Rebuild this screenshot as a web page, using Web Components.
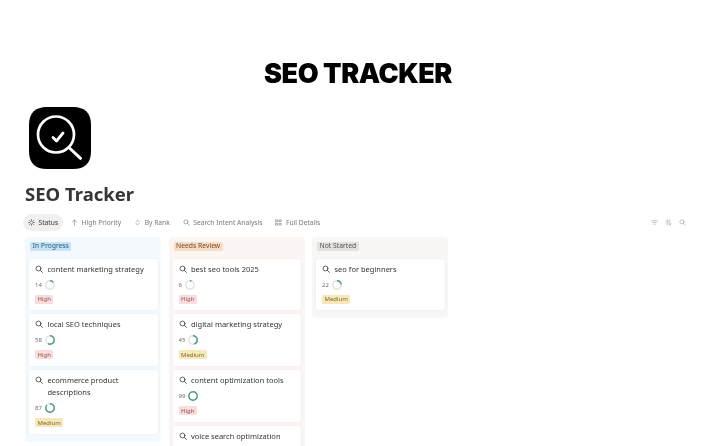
<!DOCTYPE html>
<html><head><meta charset="utf-8"><title>SEO Tracker</title>
<style>
html,body{margin:0;padding:0;background:#fff;height:446px;overflow:hidden}
body{font-family:"Noto Sans","Open Sans",sans-serif;color:#37352f}
</style></head><body>
<seo-app></seo-app>
<script>
const I={
 search:'<circle cx="6.6" cy="6.6" r="4.6"/><path d="M10 10l4 4"/>',
 loader:'<path d="M8 1.5v3M8 11.5v3M1.5 8h3M11.5 8h3M3.4 3.4l2.1 2.1M10.5 10.5l2.1 2.1M3.4 12.6l2.1-2.1M10.5 5.5l2.1-2.1"/>',
 up:'<path d="M8 14.5V2M2.8 7.2L8 2l5.2 5.2"/>',
 updown:'<path d="M4.5 6L8 2.5 11.5 6M4.5 10L8 13.5 11.5 10"/>',
 grid:'<path d="M2 2h4v4H2zM10 2h4v4h-4zM2 10h4v4H2zM10 10h4v4h-4z"/>',
 filter:'<path d="M1.5 4h13M4 8h8M6.5 12h3"/>',
 sort:'<path d="M5 14V2.5M2 5.5l3-3 3 3M11 2v11.5M8 10.5l3 3 3-3"/>'
};
class BaseEl extends HTMLElement{
 render(html){ if(!this.shadowRoot) this.attachShadow({mode:'open'}); this.shadowRoot.innerHTML=html; }
}
class UiIcon extends BaseEl{ connectedCallback(){
 const s=this.getAttribute('size')||8, w=this.getAttribute('weight')||1.5;
 this.render(`<style>:host{display:inline-flex;flex:none;width:${s}px;height:${s}px;color:inherit}svg{width:100%;height:100%;display:block}</style>
 <svg viewBox="0 0 16 16" fill="none" stroke="currentColor" stroke-width="${w}" stroke-linecap="round" stroke-linejoin="round">${I[this.getAttribute('name')]}</svg>`);
}}
class ScoreRing extends BaseEl{ connectedCallback(){
 const v=+this.getAttribute('value');
 this.render(`<style>:host{display:flex;align-items:center;gap:3px;height:12px;font-size:6px;color:#6f6e69}svg{width:10px;height:10px;display:block;transform:rotate(-90deg)}</style>
 <span>${v}</span><svg viewBox="0 0 10 10" fill="none" stroke-width="1.4"><circle cx="5" cy="5" r="4.2" stroke="#e3e2df"/><circle cx="5" cy="5" r="4.2" stroke="#4a9d80" pathLength="100" stroke-dasharray="${v} 100"/></svg>`);
}}
class TagPill extends BaseEl{ connectedCallback(){
 const c=this.getAttribute('kind');
 const m={High:['#fbdcdc','#8f5454'],Medium:['#f7e7b9','#7d6a35'],blue:['#c7e3f8','#2f5c7c'],orange:['#f9dcc3','#6f4a2c'],gray:['#e3e2df','#55534e']}[c];
 this.render(`<style>:host{display:inline-flex;align-items:center;height:var(--h,9px);padding:0 var(--px,2.5px);border-radius:1.5px;background:${m[0]};color:${m[1]};font-size:var(--fs,6px);line-height:1;white-space:nowrap}</style><slot></slot>`);
}}
class SeoCard extends BaseEl{ connectedCallback(){
 const p=this.getAttribute('priority'), s=this.getAttribute('score');
 this.render(`<style>
 :host{display:block;box-sizing:border-box;min-height:51.5px;background:#fff;border-radius:3px;padding:4px 6px 6.5px;box-shadow:0 0 3px rgba(15,15,15,.06)}
 .t{display:flex;gap:4px;font-size:7.5px;line-height:12px;color:#37352f;font-weight:400}
 ui-icon{margin-top:2px;color:#45443f}
 score-ring{margin-top:4px}
 .p{display:flex;margin-top:4px}
 </style><div class="t"><ui-icon name="search" size="8.5" weight="1.6"></ui-icon><span><slot></slot></span></div>
 ${s?`<score-ring value="${s}"></score-ring>`:''}
 ${p?`<div class="p"><tag-pill kind="${p}">${p}</tag-pill></div>`:''}`);
}}
class BoardColumn extends BaseEl{ connectedCallback(){
 this.render(`<style>
 :host{display:block;width:136px;box-sizing:border-box;padding:5px 3.5px 8px 4px;border-radius:4px;background:var(--bg);align-self:start}
 .h{display:flex;padding-left:1px;margin-bottom:7.7px;--h:9px;--fs:6.8px}
 .c{display:flex;flex-direction:column;gap:4.3px}
 </style><div class="h"><tag-pill kind="${this.getAttribute('kind')}">${this.getAttribute('label')}</tag-pill></div><div class="c"><slot></slot></div>`);
}}
class ViewTab extends BaseEl{ connectedCallback(){
 const a=this.hasAttribute('active');
 this.render(`<style>:host{display:inline-flex;align-items:center;gap:3.5px;height:17px;padding:0 5px;border-radius:9px;background:${a?'#f1f0ee':'transparent'};color:${a?'#37352f':'#7b7a75'};font-size:6.7px;white-space:nowrap}</style>
 <ui-icon name="${this.getAttribute('icon')}" size="7" weight="1.4"></ui-icon><slot></slot>`);
}}
class SeoApp extends BaseEl{ connectedCallback(){
 this.render(`<style>
 :host{display:block;height:446px;overflow:hidden;filter:blur(.3px)}
 h1{margin:0;padding-top:60px;text-align:center;font:900 27px/28px Inter,"Liberation Sans",sans-serif;color:#000;letter-spacing:-.45px}
 .logo{display:block;margin:19px 0 0 29px;width:62px;height:62px}
 h2{margin:12px 0 0 25px;font:700 18.5px/26px "Noto Sans",sans-serif;color:#37352f}
 .bar{display:flex;align-items:center;justify-content:space-between;margin:7px 30px 0 23px;height:17px}
 .tabs{display:flex;gap:3px}
 .tools{display:flex;gap:7px;color:#a5a4a0}
 .board{display:flex;gap:7.5px;margin:6px 0 0 25px}
 </style>
 <h1>SEO TRACKER</h1>
 <svg class="logo" viewBox="0 0 62 62"><path d="M18 0h26c12 0 18 6 18 18v26c0 12-6 18-18 18H18C6 62 0 56 0 44V18C0 6 6 0 18 0z" fill="#000"/>
  <g fill="none" stroke="#fff" stroke-linecap="round" stroke-linejoin="round"><circle cx="27" cy="27.5" r="18" stroke-width="2.7"/><path d="M41 41.5l10.5 9.8" stroke-width="3"/><path d="M24 30.5l3.5 3.5 6.5-8" stroke-width="2.8"/></g></svg>
 <h2>SEO Tracker</h2>
 <div class="bar"><div class="tabs">
  <view-tab icon="loader" active>Status</view-tab><view-tab icon="up">High Priority</view-tab><view-tab icon="updown">By Rank</view-tab><view-tab icon="search">Search Intent Analysis</view-tab><view-tab icon="grid">Full Details</view-tab>
 </div><div class="tools"><ui-icon name="filter" size="7"></ui-icon><ui-icon name="sort" size="7"></ui-icon><ui-icon name="search" size="7"></ui-icon></div></div>
 <div class="board">
  <board-column kind="blue" label="In Progress" style="--bg:#f4f9fd">
   <seo-card score="14" priority="High">content marketing strategy</seo-card>
   <seo-card score="58" priority="High">local SEO techniques</seo-card>
   <seo-card score="87" priority="Medium">ecommerce product descriptions</seo-card>
  </board-column>
  <board-column kind="orange" label="Needs Review" style="--bg:#fbf6f3">
   <seo-card score="6" priority="High">best seo tools 2025</seo-card>
   <seo-card score="45" priority="Medium">digital marketing strategy</seo-card>
   <seo-card score="99" priority="High">content optimization tools</seo-card>
   <seo-card>voice search optimization</seo-card>
  </board-column>
  <board-column kind="gray" label="Not Started" style="--bg:#f8f7f5">
   <seo-card score="22" priority="Medium">seo for beginners</seo-card>
  </board-column>
 </div>`);
}}
customElements.define('ui-icon',UiIcon);
customElements.define('score-ring',ScoreRing);
customElements.define('tag-pill',TagPill);
customElements.define('seo-card',SeoCard);
customElements.define('board-column',BoardColumn);
customElements.define('view-tab',ViewTab);
customElements.define('seo-app',SeoApp);
</script></body></html>
